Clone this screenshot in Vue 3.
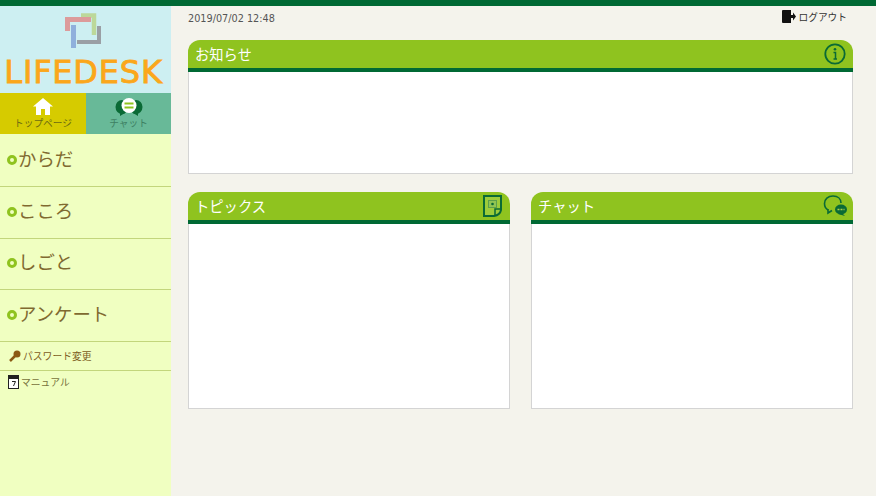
<script setup>
const menu = ['からだ', 'こころ', 'しごと', 'アンケート']
</script>

<template>
  <div class="page">
    <div class="topbar"></div>
    <div class="body">
      <aside class="side">
        <div class="brand">
          <svg class="logo" width="37" height="36" viewBox="0 0 37 36">
            <path d="M16 2.500H29V22" fill="none" stroke="#bcd89a" stroke-width="4.500" />
            <path d="M26 6.500H2.500V18" fill="none" stroke="#dc9b9b" stroke-width="5" />
            <path d="M34 13V29H12" fill="none" stroke="#9a9fa5" stroke-width="4" />
            <path d="M8.500 12V35" fill="none" stroke="#8fb0dc" stroke-width="5" />
          </svg>
          <div class="wordmark">LIFEDESK</div>
        </div>
        <div class="tabs">
          <div class="tab home">
            <svg width="20" height="17" viewBox="0 0 20 17"><path d="M10 0 20 8.500H17V17H12V11H8V17H3V8.500H0Z" fill="#fff"/></svg>
            <span>トップページ</span>
          </div>
          <div class="tab chat">
            <svg width="28" height="18" viewBox="0 0 28 18">
              <ellipse cx="7" cy="9" rx="6.500" ry="7" fill="#0a6a35"/>
              <ellipse cx="21" cy="9" rx="6.500" ry="7" fill="#0a6a35"/>
              <path d="M5 15 5 18 10 15ZM23 15 23 18 18 15Z" fill="#0a6a35"/>
              <circle cx="14" cy="7.500" r="7.500" fill="#fff"/>
              <path d="M9.500 5.500H18.500M9.500 9.500H18.500" stroke="#8fc31f" stroke-width="2"/>
            </svg>
            <span>チャット</span>
          </div>
        </div>
        <nav class="menu">
          <a v-for="item in menu" :key="item" class="menu-item"><i class="dot"></i>{{ item }}</a>
        </nav>
        <a class="sub pw">
          <svg width="12" height="12" viewBox="0 0 12 12"><circle cx="8" cy="4" r="3.500" fill="#8b5a14"/><path d="M6 6 1 11" stroke="#8b5a14" stroke-width="2.500"/></svg>
          パスワード変更
        </a>
        <a class="sub manual">
          <svg width="11" height="14" viewBox="0 0 11 14"><rect x=".5" y="1.500" width="10" height="12" fill="#fff" stroke="#222"/><rect x="0" y="0" width="11" height="4" fill="#222"/><path d="M4 6.500H7.500L5.500 11" fill="none" stroke="#222"/></svg>
          マニュアル
        </a>
      </aside>
      <main class="main">
        <div class="status">
          <span class="date">2019/07/02 12:48</span>
          <a class="logout">
            <svg width="14" height="13" viewBox="0 0 14 13"><path d="M0 1Q0 0 1 0H9V13H1Q0 13 0 12Z" fill="#111"/><path d="M9 5H11V2.500L14 6.500 11 10.500V8H9Z" fill="#111"/></svg>
            ログアウト
          </a>
        </div>
        <section class="panel notice">
          <header class="head">
            <span>お知らせ</span>
            <svg width="22" height="22" viewBox="0 0 22 22"><circle cx="11" cy="11" r="9.700" fill="none" stroke="#0a6a35" stroke-width="1.800"/><circle cx="11" cy="6.200" r="1.300" fill="#0a6a35"/><path d="M9.500 9.500H11.500V15.500M9.500 16H13" fill="none" stroke="#0a6a35" stroke-width="1.500"/></svg>
          </header>
          <div class="content"></div>
        </section>
        <div class="row">
          <section class="panel half">
            <header class="head">
              <span>トピックス</span>
              <svg class="topic-icon" width="19" height="22" viewBox="0 0 19 22"><path d="M1 1H18V15Q17 20 11 21H1Z" fill="#9ccc3a" stroke="#0a6a35" stroke-width="2"/><path d="M18 14H12V21" fill="none" stroke="#0a6a35" stroke-width="1.500"/><rect x="5.500" y="5.500" width="8" height="7" fill="#8fc454" stroke="#5da04a"/><circle cx="9.500" cy="9" r="1.300" fill="#0a6a35"/></svg>
            </header>
            <div class="content"></div>
          </section>
          <section class="panel half">
            <header class="head">
              <span>チャット</span>
              <svg class="chat-icon" width="24" height="22" viewBox="0 0 24 22"><path d="M5 15C2.500 13.500 1.500 11 1.500 8.500 1.500 4 5 1 10 1S18 4 18 8" fill="none" stroke="#0a6a35" stroke-width="1.600"/><path d="M5 14V18L9 15.500" fill="none" stroke="#0a6a35" stroke-width="1.600"/><ellipse cx="18" cy="14.500" rx="6" ry="5" fill="#0a6a35"/><path d="M19 18 22 21 15 19Z" fill="#0a6a35"/><path d="M14.500 14.500H21.500" stroke="#a9cf4a" stroke-width="1.500" stroke-dasharray="2 1"/></svg>
            </header>
            <div class="content"></div>
          </section>
        </div>
      </main>
    </div>
  </div>
</template>

<style>
html, body { margin: 0; background: #f4f3ec; }
</style>

<style scoped>
.page {
  width: 876px;
  height: 496px;
  overflow: hidden;
  background: #f4f3ec;
  font-family: "Noto Sans CJK JP", "Noto Sans", sans-serif;
}
.topbar { height: 6px; background: #006934; }
.body { display: flex; height: 490px; }
.side { width: 171px; flex: none; background: #f0ffc1; display: flex; flex-direction: column; }
.brand {
  height: 87px;
  background: #cdeff2;
  display: flex;
  flex-direction: column;
  align-items: center;
  padding-top: 7px;
  box-sizing: border-box;
}
.logo { display: block; margin-right: 5px; }
.wordmark {
  font-family: "DejaVu Sans", sans-serif;
  font-size: 32px;
  line-height: 34px;
  margin-top: 6px;
  margin-right: 4px;
  color: #fba71b;
  -webkit-text-stroke: 0.900px #fba71b;
  letter-spacing: 0.800px;
  white-space: nowrap;
}
.tabs { display: flex; height: 41px; }
.tab {
  display: flex;
  flex-direction: column;
  align-items: center;
  justify-content: flex-start;
  padding-top: 5px;
  box-sizing: border-box;
  font-size: 9.700px;
  line-height: 12px;
}
.tab svg { display: block; margin-bottom: 1px; }
.home svg { margin-bottom: 2px; }
.home { width: 86px; background: #d6cb00; color: #6d6b10; }
.chat { width: 85px; background: #68b998; color: #3d7f62; }
.menu { display: flex; flex-direction: column; padding-top: 1.500px; }
.menu-item {
  height: 51.500px;
  box-sizing: border-box;
  padding: 7.500px 0 0 7px;
  display: flex;
  align-items: flex-start;
  font-size: 18.400px;
  line-height: 30px;
  color: #806a30;
  border-bottom: 1px solid #c3d67c;
}
.dot {
  width: 10px;
  height: 10px;
  margin: 12px 1px 0 0;
  flex: none;
  box-sizing: border-box;
  border-radius: 50%;
  border: 3px solid #8fc31f;
  background: #f0ffc1;
}
.sub {
  display: flex;
  align-items: center;
  font-size: 9.800px;
  color: #7c5c22;
  white-space: nowrap;
}
.pw { height: 28px; gap: 2px; padding-left: 9px; border-bottom: 1px solid #c3d67c; }
.manual { height: 23px; gap: 2px; padding-left: 8px; color: #77723c; }
.main { flex: 1; padding: 0 23px 0 17px; min-width: 0; }
.status {
  display: flex;
  justify-content: space-between;
  height: 34px;
  color: #555;
}
.date { font-family: "DejaVu Sans", sans-serif; font-size: 9.700px; line-height: 12px; margin-top: 7px; }
.logout {
  display: flex;
  align-items: center;
  gap: 3px;
  height: 13px;
  margin: 4px 6px 0 0;
  font-size: 9.700px;
  color: #333;
}
.panel { display: flex; flex-direction: column; }
.head {
  height: 32px;
  box-sizing: border-box;
  background: #8fc31f;
  border-bottom: 4px solid #006934;
  border-radius: 12px 12px 0 0;
  display: flex;
  align-items: center;
  justify-content: space-between;
  padding: 0 7px 0 7px;
  color: #fff;
  font-size: 14.300px;
}
.head span { margin-bottom: 2px; }
.topic-icon { margin-right: 1px; }
.chat-icon { margin-right: -1px; }
.content { flex: 1; background: #fff; border: 1px solid #d4d4d4; border-top: 0; }
.notice { height: 134px; }
.row { display: flex; gap: 21px; margin-top: 18px; }
.half { flex: 1; height: 217px; }
</style>
